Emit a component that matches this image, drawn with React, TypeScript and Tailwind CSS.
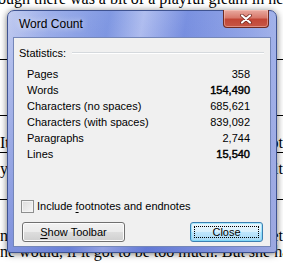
import { useState } from "react";

const STATS = [
  { label: "Pages", value: "358", strong: false },
  { label: "Words", value: "154,490", strong: true },
  { label: "Characters (no spaces)", value: "685,621", strong: false },
  { label: "Characters (with spaces)", value: "839,092", strong: false },
  { label: "Paragraphs", value: "2,744", strong: false },
  { label: "Lines", value: "15,540", strong: true },
];

function CloseGlyph() {
  return (
    <svg width="12" height="10" viewBox="0 0 12 10">
      <path d="M2 1.5 L10 8.5 M10 1.5 L2 8.5" stroke="#6b2119" strokeWidth="3.6" strokeLinecap="round" />
      <path d="M2 1.5 L10 8.5 M10 1.5 L2 8.5" stroke="#ffffff" strokeWidth="2.2" strokeLinecap="round" />
    </svg>
  );
}

export default function App() {
  const [includeNotes, setIncludeNotes] = useState(false);

  return (
    <div className="relative w-[283px] h-[266px] overflow-hidden bg-white font-['Liberation_Serif',serif] text-[16px] text-black">
      {/* document behind the dialog */}
      <div className="flex flex-col">
        <div className="h-[16px] mt-[-9px] ml-[-2px] leading-[16px] whitespace-nowrap">
          ough there was a bit of a playful gleam in her eye
        </div>
        <div className="h-[53px] border-b border-black" />
        <div className="h-[56px] border-b border-black" />
        <div className="h-[37px] border-b border-black flex items-end justify-between leading-[16px] pb-[1px]">
          <span>It</span>
          <span>ot</span>
        </div>
        <div className="h-[47px] border-b border-black flex items-start justify-between leading-[16px] pt-[8px]">
          <span>y?</span>
          <span>it</span>
        </div>
        <div className="h-[44px] flex items-end justify-between leading-[16px]">
          <span>nt</span>
          <span>et</span>
        </div>
        <div className="h-[16px] leading-[16px] whitespace-nowrap">
          ne would, if it got to be too much. But she had
        </div>
      </div>

      {/* Word Count window */}
      <div className="absolute left-[7px] top-[10px] w-[270px] h-[243px] flex flex-col px-[5px] pb-[5px] rounded-t-[7px] rounded-b-[3px] border border-[#3f5391] shadow-[0_1px_7px_rgba(0,0,0,0.55)] bg-[linear-gradient(to_bottom,rgba(255,255,255,0.08),rgba(40,50,170,0.18)),linear-gradient(100deg,#bcc7ef_0%,#94a8e8_14%,#7690e0_33%,#aab9ee_44%,#6f88de_58%,#8ea2e6_80%,#b6c2ed_100%)] font-['Liberation_Sans',Arial,sans-serif]">
        <div className="h-[26px] flex items-center pl-[6px] pb-[1px]">
          <span className="text-[12px] text-black [text-shadow:0_0_6px_rgba(255,255,255,0.95)]">Word Count</span>
        </div>

        <button className="absolute right-[7px] top-[-1px] w-[46px] h-[18px] flex items-center justify-center rounded-b-[4px] border border-t-0 border-[#6e2a22] bg-[linear-gradient(to_bottom,#e9aaa0_0%,#d8796c_45%,#c24636_55%,#c65646_100%)] shadow-[inset_0_0_0_1px_rgba(255,210,200,0.45)]">
          <CloseGlyph />
        </button>

        <div className="flex-1 flex flex-col border border-[#7486b8] bg-[#f0f0f0] text-[11px] text-black">
          <div className="mt-[8px] h-[14px] flex items-center pl-[5px] pr-[6px]">
            <span>Statistics:</span>
            <div className="flex-1 ml-[6px] h-[2px] border-t border-[#d5d9dd] border-b border-b-white" />
          </div>

          <div className="mt-[6px] flex flex-col pl-[13px] pr-[20px]">
            {STATS.map((s) => (
              <div key={s.label} className="h-[16px] flex items-center justify-between">
                <span>{s.label}</span>
                <span className={s.strong ? "[-webkit-text-stroke:0.45px_black]" : ""}>{s.value}</span>
              </div>
            ))}
          </div>

          <div className="flex-1" />

          <label className="h-[13px] flex items-center pl-[7px]">
            <input
              type="checkbox"
              checked={includeNotes}
              onChange={(e) => setIncludeNotes(e.target.checked)}
              className="sr-only"
            />
            <span className="w-[13px] h-[13px] border border-[#8e8f8f] bg-[linear-gradient(135deg,#dcdcdc,#f6f6f6)] shadow-[inset_0_0_0_1px_#f4f4f4]" />
            <span className="ml-[3px]">
              Include <span className="underline underline-offset-2">f</span>ootnotes and endnotes
            </span>
          </label>

          <div className="mt-[9px] mb-[4px] h-[20px] flex justify-between pl-[8px] pr-[7px]">
            <button className="w-[103px] h-[20px] rounded-[3px] border border-[#707070] bg-[linear-gradient(to_bottom,#f2f2f2_0%,#ebebeb_48%,#dddddd_52%,#cfcfcf_100%)] shadow-[inset_0_0_0_1px_#fcfcfc] text-[11px] leading-none">
              <span className="underline underline-offset-2">S</span>how Toolbar
            </button>
            <button className="w-[73px] h-[20px] p-[3px] rounded-[3px] border border-[#3c7fb1] bg-[linear-gradient(to_bottom,#eaf6fd_0%,#d9f0fc_48%,#bee6fd_52%,#a7d9f5_100%)] shadow-[inset_0_0_0_1px_#48d6fd66] text-[11px] leading-none">
              <span className="w-full h-full flex items-center justify-center border border-dotted border-black">Close</span>
            </button>
          </div>
        </div>
      </div>
    </div>
  );
}
